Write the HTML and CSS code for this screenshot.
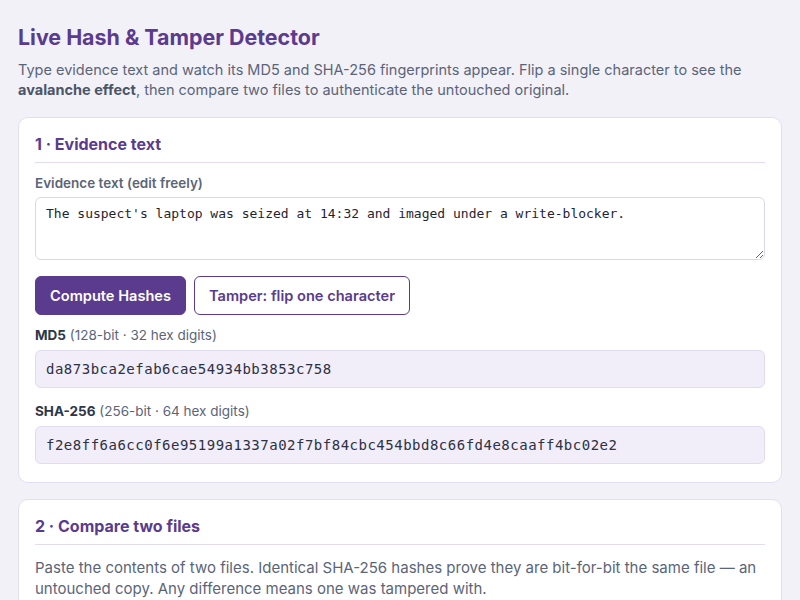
FILE: index.html
```html
<!DOCTYPE html>
<html lang="en">
<head>
    <meta charset="UTF-8">
    <meta name="viewport" content="width=device-width, initial-scale=1.0">
    <title>Live Hash &amp; Tamper Detector</title>
    <link rel="stylesheet" href="styles.css">
</head>
<body>
    <header class="intro">
        <h1>Live Hash &amp; Tamper Detector</h1>
        <p>Type evidence text and watch its MD5 and SHA-256 fingerprints appear. Flip a single character to see the <strong>avalanche effect</strong>, then compare two files to authenticate the untouched original.</p>
    </header>

    <main>
        <section class="card">
            <h2>1 · Evidence text</h2>
            <label class="field-label" for="evidence">Evidence text (edit freely)</label>
            <textarea id="evidence" class="evidence">The suspect's laptop was seized at 14:32 and imaged under a write-blocker.</textarea>

            <div class="actions">
                <button class="btn btn-primary">Compute Hashes</button>
                <button class="btn btn-outline">Tamper: flip one character</button>
            </div>

            <div class="hash-label"><strong>MD5</strong> (128-bit · 32 hex digits)</div>
            <div class="hash-box">da873bca2efab6cae54934bb3853c758</div>

            <div class="hash-label"><strong>SHA-256</strong> (256-bit · 64 hex digits)</div>
            <div class="hash-box">f2e8ff6a6cc0f6e95199a1337a02f7bf84cbc454bbd8c66fd4e8caaff4bc02e2</div>
        </section>

        <section class="card">
            <h2>2 · Compare two files</h2>
            <p class="note">Paste the contents of two files. Identical SHA-256 hashes prove they are bit-for-bit the same file — an untouched copy. Any difference means one was tampered with.</p>
            <div class="files">
                <div>
                    <label class="field-label">File A</label>
                    <textarea class="evidence"></textarea>
                </div>
                <div>
                    <label class="field-label">File B</label>
                    <textarea class="evidence"></textarea>
                </div>
            </div>
        </section>
    </main>
</body>
</html>
```

FILE: styles.css
```css
body {
    font-family: 'Inter', 'Liberation Sans', sans-serif;
    margin: 0;
    padding: 20px 18px;
    color: #2d3748;
    background-color: #f3f1f8;
}
.intro h1 {
    margin: 4px 0 10px;
    font-size: 21.4px;
    font-weight: 700;
    color: #5a3b8e;
}
.intro p {
    margin: 0 0 17px;
    font-size: 14.5px;
    line-height: 20px;
    color: #5b6578;
}
.intro strong {
    color: #4a5568;
}
.card {
    background-color: #fff;
    border: 1px solid #e4dff0;
    border-radius: 10px;
    padding: 14px 16px 18px;
    margin-bottom: 16px;
}
.card h2 {
    margin: 0 0 12px;
    padding: 2px 0 8px;
    font-size: 16px;
    font-weight: 700;
    color: #5a3b8e;
    border-bottom: 1px solid #e2dcec;
}
.field-label {
    display: block;
    font-size: 13.5px;
    font-weight: 600;
    color: #5b6578;
    margin-bottom: 6px;
}
.evidence {
    display: block;
    box-sizing: border-box;
    width: 100%;
    height: 63px;
    padding: 8px 10px;
    font-family: 'DejaVu Sans Mono', monospace;
    font-size: 13px;
    color: #1f2430;
    border: 1px solid #dcd7e6;
    border-radius: 6px;
    background: #fff;
}
.actions {
    display: flex;
    gap: 8px;
    margin: 16px 0 12px;
}
.btn {
    font-family: inherit;
    font-size: 14.6px;
    font-weight: 600;
    height: 39px;
    padding: 0 14px;
    border-radius: 6px;
    cursor: pointer;
}
.btn-primary {
    background-color: #5a3b8e;
    border: 1px solid #5a3b8e;
    color: #fff;
}
.btn-outline {
    background-color: #fff;
    border: 1px solid #5a3b8e;
    color: #5a3b8e;
}
.hash-label {
    font-size: 13.5px;
    color: #5b6578;
    margin-bottom: 7px;
}
.hash-label strong {
    color: #2d3748;
}
.hash-box {
    font-family: 'DejaVu Sans Mono', monospace;
    font-size: 14px;
    letter-spacing: 0.5px;
    color: #2d3142;
    background-color: #f1edf9;
    border: 1px solid #e2dcef;
    border-radius: 6px;
    padding: 10px 10px;
    margin-bottom: 15px;
}
.hash-box:last-child {
    margin-bottom: 0;
}
.note {
    margin: 0 0 12px;
    font-size: 15px;
    line-height: 21px;
    color: #5b6578;
}
.files {
    display: grid;
    grid-template-columns: 1fr 1fr;
    gap: 12px;
}
```
